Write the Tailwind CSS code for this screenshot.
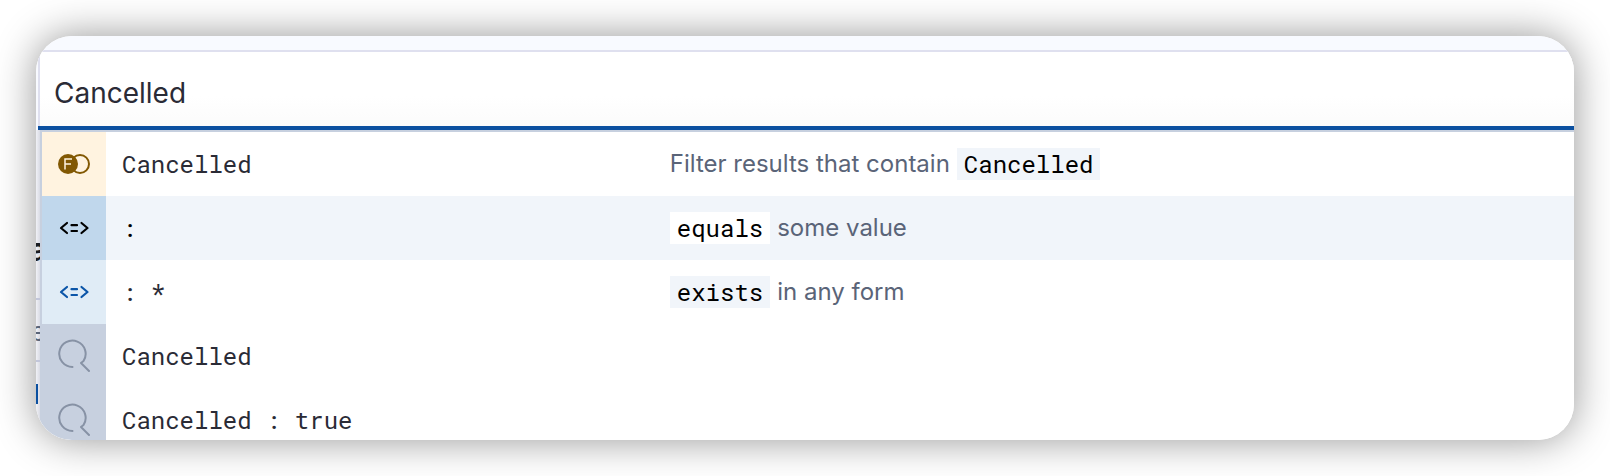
<!DOCTYPE html>
<html lang="en">
<head>
<meta charset="utf-8">
<title>Query bar suggestions</title>
<script src="https://cdn.jsdelivr.net/npm/@tailwindcss/browser@4"></script>
</head>
<body class="bg-white font-['Inter',sans-serif]">
<svg class="hidden" aria-hidden="true">
  <symbol id="operand" viewBox="0 0 32 16">
    <g fill="none" stroke="currentColor" stroke-width="2.2" stroke-linecap="round" stroke-linejoin="round">
      <path d="M9 3 3 8l6 5M23.500 3l6 5-6 5"/>
      <path d="M13.500 5.200h5.500M13.500 11h5.500"/>
    </g>
  </symbol>
  <symbol id="search" viewBox="0 0 34 34">
    <path d="M15.500 28A13.200 13.200 0 1 1 26.500 22L24 24l8 8" fill="none" stroke="currentColor" stroke-width="2" stroke-linecap="round" stroke-linejoin="round"/>
  </symbol>
</svg>
<main class="h-screen p-9">
  <div class="flex h-full flex-col overflow-hidden rounded-[36px] bg-white shadow-[0_0_40px_rgba(0,0,0,0.42)]">
    <div class="h-4 shrink-0 border-b-2 border-[#dfe0ef] bg-[#f8faff]"></div>
    <div class="flex shrink-0 bg-[#f8faff] pl-0.5">
      <div class="flex min-w-0 flex-1 border-b-4 border-[#0b50a0]">
        <label for="query" class="sr-only">Query</label>
        <input id="query" type="text" value="Cancelled" class="h-[74px] min-w-0 flex-1 border-l-2 border-[#dfe0ef] bg-linear-to-b from-white from-60% to-[#fbfbfb] px-3.5 pt-2 text-[28px] text-[#2a2b36] outline-none">
      </div>
    </div>
    <div class="flex min-h-0 flex-1">
      <div class="flex w-1 shrink-0 flex-col items-center overflow-hidden bg-linear-to-r from-[#f0f1f6] to-[#d9dbe4]" aria-hidden="true">
        <span class="mt-[104px] text-[32px] leading-8 font-bold text-[#1a1c21]">a</span>
        <span class="mt-8 h-0.5 w-full shrink-0 bg-[#c2c6da]"></span>
        <span class="mt-4 text-[26px] leading-8 text-[#5a6478]">e</span>
        <span class="mt-3 h-0.5 w-full shrink-0 bg-[#c2c6da]"></span>
        <span class="mt-[22px] mr-0.5 h-5 w-0.5 shrink-0 bg-[#0b50a0]"></span>
      </div>
      <ul class="min-w-0 flex-1 overflow-hidden border-t-2 border-l-2 border-[#c7d0df] bg-white">
        <li>
          <button type="button" class="flex h-16 w-full items-center text-left text-2xl text-[#2a2b36]">
            <span class="flex size-16 shrink-0 items-center justify-center bg-[#fff3e0] text-[#825803]">
              <svg class="h-5 w-8" viewBox="0 0 32 20" aria-hidden="true">
                <circle cx="22" cy="10" r="9" fill="none" stroke="currentColor" stroke-width="2"/>
                <circle cx="10" cy="10" r="10" fill="currentColor"/>
                <path d="M7 15.500V5h7M7 10h6" fill="none" stroke="#fff3e0" stroke-width="1.500"/>
              </svg>
            </span>
            <span class="w-[36.8%] shrink-0 pl-4 font-['Roboto_Mono','Liberation_Mono',monospace]">Cancelled</span>
            <span class="flex items-center gap-[7px] whitespace-nowrap text-[#5a6478]">Filter results that contain <code class="bg-[#f1f5fa] px-[7px] font-['Roboto_Mono','Liberation_Mono',monospace] text-black">Cancelled</code></span>
          </button>
        </li>
        <li>
          <button type="button" class="flex h-16 w-full items-center bg-[#f1f5fa] text-left text-2xl text-black">
            <span class="flex size-16 shrink-0 items-center justify-center bg-[#c0d7ec] text-black">
              <svg class="h-4 w-8" aria-hidden="true"><use href="#operand"/></svg>
            </span>
            <span class="w-[36.8%] shrink-0 pl-4 font-['Roboto_Mono','Liberation_Mono',monospace]">:</span>
            <span class="flex items-center gap-[7px] whitespace-nowrap text-[#5a6478]"><code class="bg-white px-[7px] font-['Roboto_Mono','Liberation_Mono',monospace] text-black">equals</code> some value</span>
          </button>
        </li>
        <li>
          <button type="button" class="flex h-16 w-full items-center text-left text-2xl text-[#2a2b36]">
            <span class="flex size-16 shrink-0 items-center justify-center bg-[#e0ecf6] text-[#0b55a8]">
              <svg class="h-4 w-8" aria-hidden="true"><use href="#operand"/></svg>
            </span>
            <span class="w-[36.8%] shrink-0 pl-4 font-['Roboto_Mono','Liberation_Mono',monospace]">: *</span>
            <span class="flex items-center gap-[7px] whitespace-nowrap text-[#5a6478]"><code class="bg-[#f1f5fa] px-[7px] font-['Roboto_Mono','Liberation_Mono',monospace] text-black">exists</code> in any form</span>
          </button>
        </li>
        <li>
          <button type="button" class="flex h-16 w-full items-center text-left text-2xl text-[#2a2b36]">
            <span class="flex size-16 shrink-0 items-center justify-center bg-[#c7d0df] text-[#8792a5]">
              <svg class="size-[34px]" aria-hidden="true"><use href="#search"/></svg>
            </span>
            <span class="shrink-0 pl-4 font-['Roboto_Mono','Liberation_Mono',monospace]">Cancelled</span>
          </button>
        </li>
        <li>
          <button type="button" class="flex h-16 w-full items-center text-left text-2xl text-[#2a2b36]">
            <span class="flex size-16 shrink-0 items-center justify-center bg-[#c7d0df] text-[#8792a5]">
              <svg class="size-[34px]" aria-hidden="true"><use href="#search"/></svg>
            </span>
            <span class="shrink-0 pl-4 font-['Roboto_Mono','Liberation_Mono',monospace]">Cancelled : true</span>
          </button>
        </li>
      </ul>
    </div>
  </div>
</main>
</body>
</html>
